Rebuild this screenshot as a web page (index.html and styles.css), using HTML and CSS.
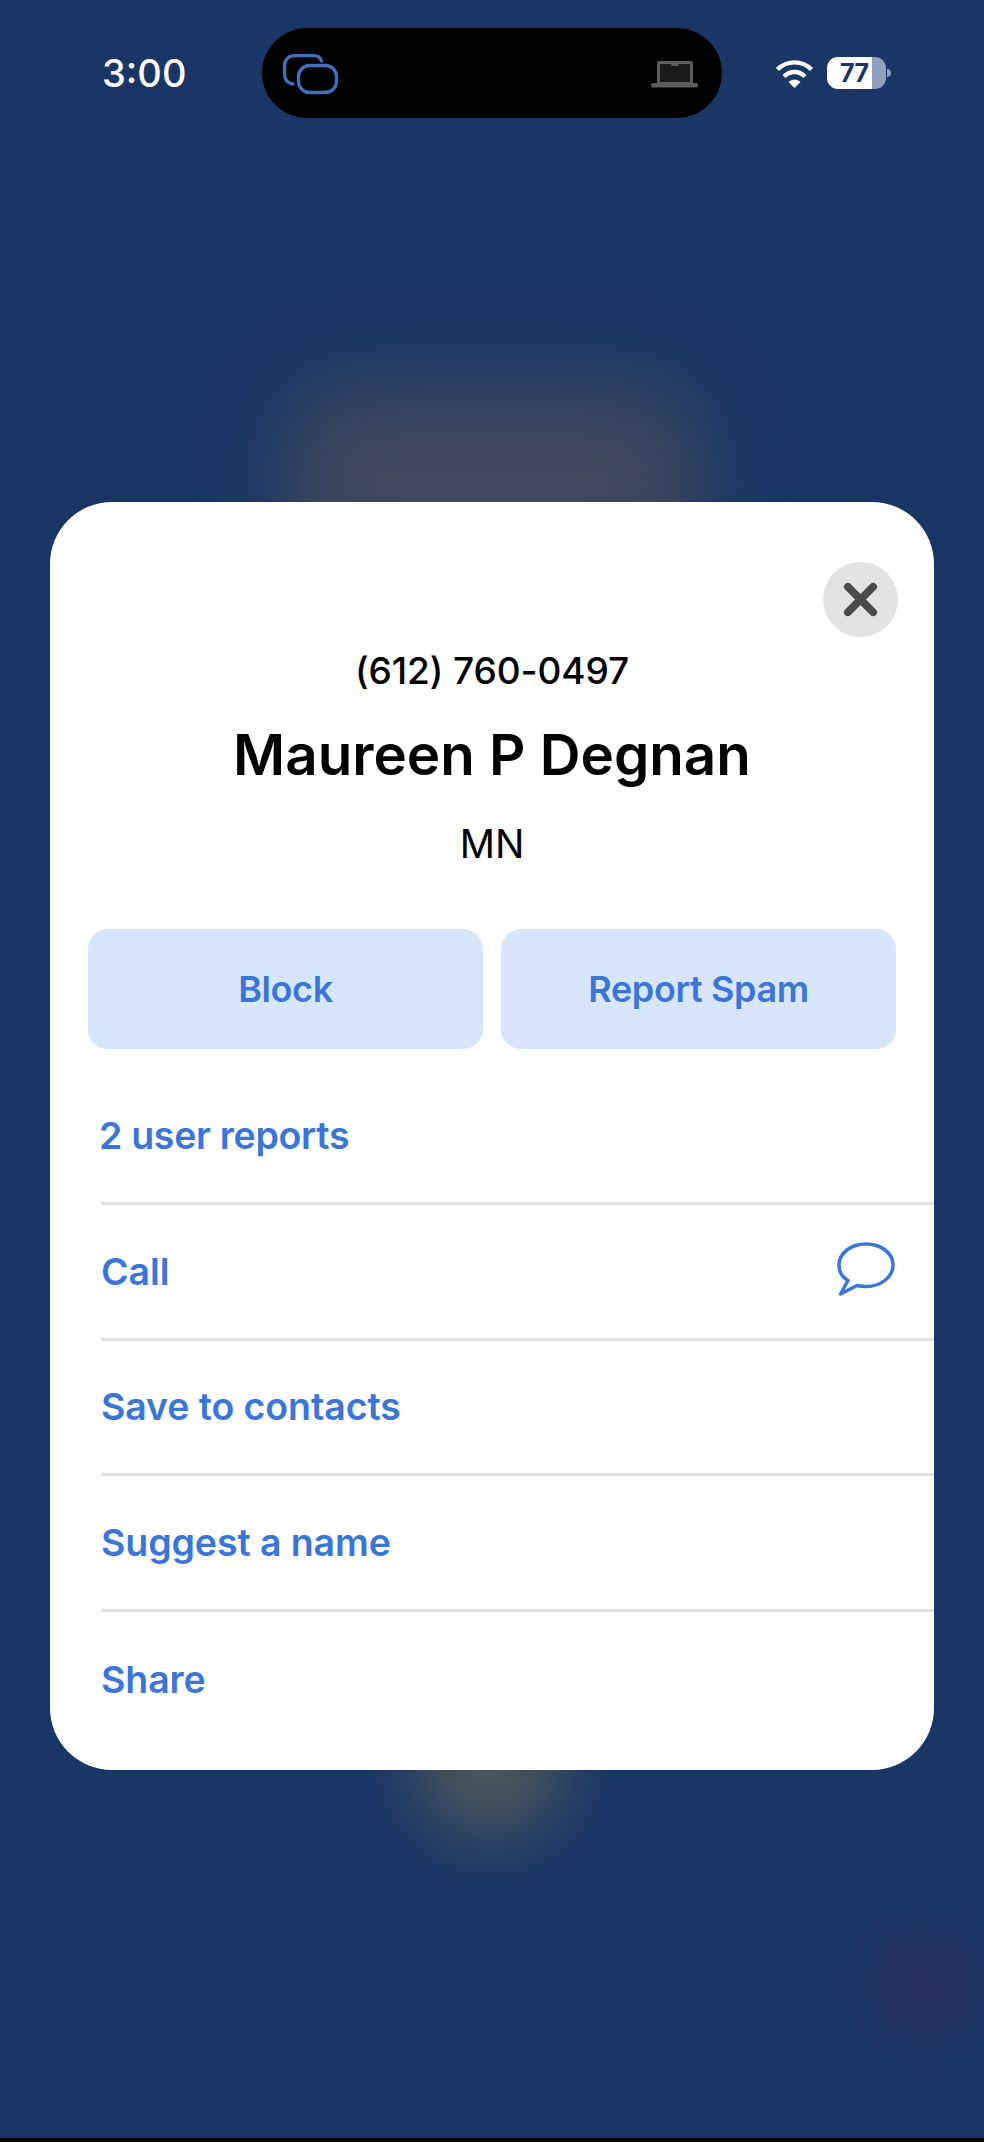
FILE: index.html
```html
<!DOCTYPE html>
<html lang="en">
<head>
<meta charset="utf-8">
<title>Caller details</title>
<link rel="stylesheet" href="styles.css">
</head>
<body>
<div class="screen">
  <div class="glow glow-top"></div>
  <header class="status">
    <span class="time">3:00</span>
    <div class="island">
      <svg class="copy-icon" viewBox="0 0 57 43" fill="none" stroke="#3f70bd" stroke-width="3.300" stroke-linecap="round">
        <path d="M39.500 8C38 4 35 2.700 32 2.700H13C6 2.700 2.500 7 2.500 13V21C2.500 26 5 30 11 31"/>
        <rect x="16.500" y="12.500" width="38" height="27" rx="11"/>
      </svg>
      <svg class="laptop-icon" viewBox="0 0 48 28">
        <path d="M6 3.500A2.500 2.500 0 0 1 8.500 1h31A2.500 2.500 0 0 1 42 3.500V24H6z" fill="#5c5c5c"/>
        <path d="M9 4H20l1 2h6l1-2h11V22H9z" fill="#191919"/>
        <rect x="0" y="23" width="47" height="4.500" rx="2" fill="#5c5c5c"/>
      </svg>
    </div>
    <div class="indicators">
      <svg class="wifi-icon" viewBox="0 0 39 29" fill="none" stroke="#fff" stroke-width="4.400">
        <path d="M2.500 10.500C12 1 27 1 36.500 10.500"/>
        <path d="M9 17.500C15 11.500 24 11.500 30 17.500"/>
        <path d="M19.500 29L13.500 23C17 19.500 22 19.500 25.500 23Z" fill="#fff" stroke="none"/>
      </svg>
      <div class="battery"><span class="battery-level">77</span></div>
      <span class="battery-nub"></span>
    </div>
  </header>

  <main class="card">
    <button class="close" type="button" aria-label="Close">
      <svg viewBox="0 0 36 36" fill="none" stroke="#4b4b4b" stroke-width="8" stroke-linecap="round">
        <path d="M5 5L31 31M31 5L5 31"/>
      </svg>
    </button>
    <p class="phone">(612) 760-0497</p>
    <h1 class="name">Maureen P Degnan</h1>
    <p class="region">MN</p>
    <div class="actions">
      <button class="action" type="button">Block</button>
      <button class="action" type="button">Report Spam</button>
    </div>
    <ul class="rows">
      <li class="row row-reports">2 user reports</li>
      <li class="row">
        <span>Call</span>
        <svg class="bubble" viewBox="0 0 58 54" fill="none" stroke="#3a76d8" stroke-width="3.500" stroke-linejoin="round">
          <path d="M20 43.500C23 44.300 26 44.500 29 44.500C44 44.500 56 35 56 23C56 11 44 2 29 2C14 2 2 11 2 23C2 29.500 5 35 11 38.500L3.500 52Z"/>
        </svg>
      </li>
      <li class="row">Save to contacts</li>
      <li class="row">Suggest a name</li>
      <li class="row">Share</li>
    </ul>
  </main>
  <div class="edge"></div>
</div>
</body>
</html>
```
FILE: styles.css
```css
* { box-sizing: border-box; }
html, body { margin: 0; padding: 0; }
body { background: #1a3666; }
.screen {
  position: relative;
  width: 984px;
  height: 2142px;
  display: flex;
  flex-direction: column;
  overflow: hidden;
  font-family: Inter, "Liberation Sans", sans-serif;
  background:
    radial-gradient(ellipse 125px 125px at 490px 1762px, rgba(135,125,75,.48) 0%, rgba(135,125,75,.34) 38%, rgba(135,125,75,.13) 70%, rgba(135,125,75,0) 100%),
    radial-gradient(ellipse 85px 85px at 925px 1985px, rgba(120,20,70,.15) 0%, rgba(120,20,70,.09) 55%, rgba(120,20,70,0) 100%),
    #1a3666;
}
.glow {
  position: absolute;
  pointer-events: none;
}
.glow-top {
  left: 285px;
  top: 385px;
  width: 415px;
  height: 200px;
  border-radius: 60px;
  background: rgba(120,100,80,.4);
  filter: blur(42px);
}
.status {
  position: relative;
  margin-top: 28px;
  height: 90px;
  padding: 0 93px 0 102px;
  display: flex;
  align-items: center;
}
.time {
  color: #fff;
  font-size: 38px;
  font-weight: 500;
  width: 160px;
}
.island {
  width: 460px;
  height: 90px;
  border-radius: 45px;
  background: #000;
  display: flex;
  align-items: center;
  justify-content: space-between;
  padding: 0 23px 0 20px;
}
.copy-icon { width: 57px; height: 43px; margin-top: 3px; }
.laptop-icon { width: 48px; height: 28px; margin-top: 2px; }
.indicators {
  margin-left: 53px;
  display: flex;
  align-items: center;
}
.wifi-icon { width: 39px; height: 29px; margin-right: 13px; }
.battery {
  width: 59px;
  height: 32px;
  border-radius: 11px;
  background: linear-gradient(90deg, #fff 0 45px, #8f9fbd 45px 100%);
  color: #1a3666;
  font-size: 25px;
  font-weight: 700;
  line-height: 32px;
  padding-left: 13px;
  letter-spacing: -.5px;
}
.battery-level { display: block; }
.battery-nub {
  width: 4px;
  height: 8px;
  margin-left: 1px;
  border-radius: 0 4px 4px 0;
  background: #8f9fbd;
}
.card {
  position: relative;
  margin: 384px 50px 0;
  height: 1268px;
  background: #fff;
  border-radius: 62px;
  display: flex;
  flex-direction: column;
  overflow: hidden;
}
.close {
  align-self: flex-end;
  width: 75px;
  height: 75px;
  margin: 60px 36px 0 0;
  padding: 20px;
  border: 0;
  border-radius: 50%;
  background: #e3e3e3;
}
.close svg { display: block; width: 35px; height: 35px; }
.phone {
  margin: 12px 0 0;
  text-align: center;
  font-size: 37px;
  line-height: 44px;
  font-weight: 500;
  letter-spacing: -.1px;
  color: #000;
}
.name {
  margin: 28px 0 0;
  text-align: center;
  font-size: 56.500px;
  line-height: 68px;
  font-weight: 600;
  color: #000;
}
.region {
  margin: 32px 0 0;
  text-align: center;
  font-size: 39px;
  line-height: 46px;
  font-weight: 400;
  color: #000;
}
.actions {
  margin: 62px 38px 0;
  display: grid;
  grid-template-columns: 1fr 1fr;
  gap: 18px;
}
.action {
  height: 120px;
  border: 0;
  border-radius: 20px;
  background: #d8e6fb;
  color: #3a76d8;
  font-family: inherit;
  font-size: 36px;
  font-weight: 600;
  letter-spacing: -.4px;
}
.rows { list-style: none; margin: 20px 0 0; padding: 0 0 0 51px; }
.row {
  height: 135.75px;
  border-bottom: 3px solid #e3e3e3;
  display: flex;
  align-items: center;
  justify-content: space-between;
  padding-right: 39px;
  color: #3a76d8;
  font-size: 37.500px;
  font-weight: 600;
  letter-spacing: -.1px;
}
.row:last-child { border-bottom: 0; }
.row-reports {
  margin-left: -2px;
  padding-bottom: 2px;
  border-bottom: 0;
  position: relative;
  letter-spacing: -.3px;
}
.row-reports::after {
  content: "";
  position: absolute;
  left: 2px;
  right: 0;
  bottom: 0;
  height: 3px;
  background: #e3e3e3;
}
.bubble { width: 58px; height: 54px; margin-bottom: 5px; }
.edge {
  margin-top: auto;
  height: 4px;
  background: #000;
}
```
